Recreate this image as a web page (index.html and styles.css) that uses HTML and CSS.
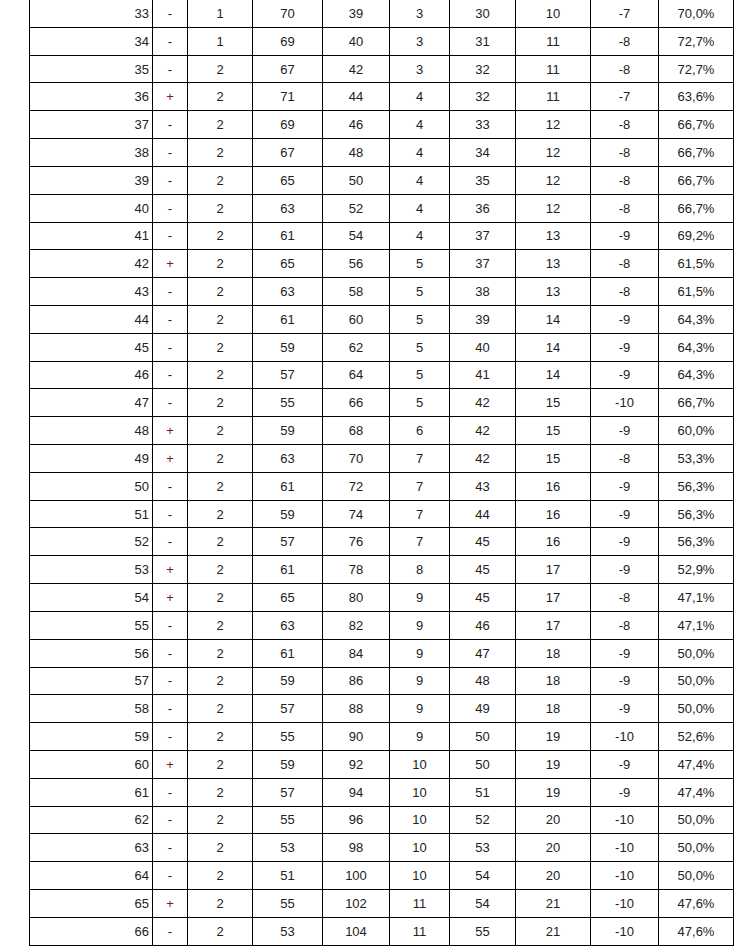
FILE: index.html
```html
<!DOCTYPE html>
<html>
<head>
<meta charset="utf-8">
<link rel="stylesheet" href="styles.css">
</head>
<body>
<table class="grid">
<colgroup>
<col class="c1"><col class="c2"><col class="c3"><col class="c4"><col class="c5"><col class="c6"><col class="c7"><col class="c8"><col class="c9"><col class="c10">
</colgroup>
<tbody>
<tr><td class="n">33</td><td>-</td><td>1</td><td>70</td><td>39</td><td>3</td><td>30</td><td>10</td><td>-7</td><td>70,0%</td></tr>
<tr><td class="n">34</td><td>-</td><td>1</td><td>69</td><td>40</td><td>3</td><td>31</td><td>11</td><td>-8</td><td>72,7%</td></tr>
<tr><td class="n">35</td><td>-</td><td>2</td><td>67</td><td>42</td><td>3</td><td>32</td><td>11</td><td>-8</td><td>72,7%</td></tr>
<tr><td class="n">36</td><td class="p">+</td><td>2</td><td>71</td><td>44</td><td>4</td><td>32</td><td>11</td><td>-7</td><td>63,6%</td></tr>
<tr><td class="n">37</td><td>-</td><td>2</td><td>69</td><td>46</td><td>4</td><td>33</td><td>12</td><td>-8</td><td>66,7%</td></tr>
<tr><td class="n">38</td><td>-</td><td>2</td><td>67</td><td>48</td><td>4</td><td>34</td><td>12</td><td>-8</td><td>66,7%</td></tr>
<tr><td class="n">39</td><td>-</td><td>2</td><td>65</td><td>50</td><td>4</td><td>35</td><td>12</td><td>-8</td><td>66,7%</td></tr>
<tr><td class="n">40</td><td>-</td><td>2</td><td>63</td><td>52</td><td>4</td><td>36</td><td>12</td><td>-8</td><td>66,7%</td></tr>
<tr><td class="n">41</td><td>-</td><td>2</td><td>61</td><td>54</td><td>4</td><td>37</td><td>13</td><td>-9</td><td>69,2%</td></tr>
<tr><td class="n">42</td><td class="p">+</td><td>2</td><td>65</td><td>56</td><td>5</td><td>37</td><td>13</td><td>-8</td><td>61,5%</td></tr>
<tr><td class="n">43</td><td>-</td><td>2</td><td>63</td><td>58</td><td>5</td><td>38</td><td>13</td><td>-8</td><td>61,5%</td></tr>
<tr><td class="n">44</td><td>-</td><td>2</td><td>61</td><td>60</td><td>5</td><td>39</td><td>14</td><td>-9</td><td>64,3%</td></tr>
<tr><td class="n">45</td><td>-</td><td>2</td><td>59</td><td>62</td><td>5</td><td>40</td><td>14</td><td>-9</td><td>64,3%</td></tr>
<tr><td class="n">46</td><td>-</td><td>2</td><td>57</td><td>64</td><td>5</td><td>41</td><td>14</td><td>-9</td><td>64,3%</td></tr>
<tr><td class="n">47</td><td>-</td><td>2</td><td>55</td><td>66</td><td>5</td><td>42</td><td>15</td><td>-10</td><td>66,7%</td></tr>
<tr><td class="n">48</td><td class="p">+</td><td>2</td><td>59</td><td>68</td><td>6</td><td>42</td><td>15</td><td>-9</td><td>60,0%</td></tr>
<tr><td class="n">49</td><td class="p">+</td><td>2</td><td>63</td><td>70</td><td>7</td><td>42</td><td>15</td><td>-8</td><td>53,3%</td></tr>
<tr><td class="n">50</td><td>-</td><td>2</td><td>61</td><td>72</td><td>7</td><td>43</td><td>16</td><td>-9</td><td>56,3%</td></tr>
<tr><td class="n">51</td><td>-</td><td>2</td><td>59</td><td>74</td><td>7</td><td>44</td><td>16</td><td>-9</td><td>56,3%</td></tr>
<tr><td class="n">52</td><td>-</td><td>2</td><td>57</td><td>76</td><td>7</td><td>45</td><td>16</td><td>-9</td><td>56,3%</td></tr>
<tr><td class="n">53</td><td class="p">+</td><td>2</td><td>61</td><td>78</td><td>8</td><td>45</td><td>17</td><td>-9</td><td>52,9%</td></tr>
<tr><td class="n">54</td><td class="p">+</td><td>2</td><td>65</td><td>80</td><td>9</td><td>45</td><td>17</td><td>-8</td><td>47,1%</td></tr>
<tr><td class="n">55</td><td>-</td><td>2</td><td>63</td><td>82</td><td>9</td><td>46</td><td>17</td><td>-8</td><td>47,1%</td></tr>
<tr><td class="n">56</td><td>-</td><td>2</td><td>61</td><td>84</td><td>9</td><td>47</td><td>18</td><td>-9</td><td>50,0%</td></tr>
<tr><td class="n">57</td><td>-</td><td>2</td><td>59</td><td>86</td><td>9</td><td>48</td><td>18</td><td>-9</td><td>50,0%</td></tr>
<tr><td class="n">58</td><td>-</td><td>2</td><td>57</td><td>88</td><td>9</td><td>49</td><td>18</td><td>-9</td><td>50,0%</td></tr>
<tr><td class="n">59</td><td>-</td><td>2</td><td>55</td><td>90</td><td>9</td><td>50</td><td>19</td><td>-10</td><td>52,6%</td></tr>
<tr><td class="n">60</td><td class="p">+</td><td>2</td><td>59</td><td>92</td><td>10</td><td>50</td><td>19</td><td>-9</td><td>47,4%</td></tr>
<tr><td class="n">61</td><td>-</td><td>2</td><td>57</td><td>94</td><td>10</td><td>51</td><td>19</td><td>-9</td><td>47,4%</td></tr>
<tr><td class="n">62</td><td>-</td><td>2</td><td>55</td><td>96</td><td>10</td><td>52</td><td>20</td><td>-10</td><td>50,0%</td></tr>
<tr><td class="n">63</td><td>-</td><td>2</td><td>53</td><td>98</td><td>10</td><td>53</td><td>20</td><td>-10</td><td>50,0%</td></tr>
<tr><td class="n">64</td><td>-</td><td>2</td><td>51</td><td>100</td><td>10</td><td>54</td><td>20</td><td>-10</td><td>50,0%</td></tr>
<tr><td class="n">65</td><td class="p">+</td><td>2</td><td>55</td><td>102</td><td>11</td><td>54</td><td>21</td><td>-10</td><td>47,6%</td></tr>
<tr><td class="n">66</td><td>-</td><td>2</td><td>53</td><td>104</td><td>11</td><td>55</td><td>21</td><td>-10</td><td>47,6%</td></tr>
</tbody>
</table>
</body>
</html>
```
FILE: styles.css
```css
html, body {
  margin: 0;
  padding: 0;
  background: #ffffff;
}
body {
  font-family: "Liberation Sans", Arial, sans-serif;
  font-size: 13px;
  color: #222222;
}
.grid {
  border-collapse: collapse;
  table-layout: fixed;
  width: 705px;
  margin: -1px 0 0 29px;
}
.grid td {
  border: 1px solid #000000;
  padding: 0;
  height: 26.82px;
  text-align: center;
  vertical-align: middle;
  line-height: 15px;
}
.grid td.n {
  text-align: right;
  padding-right: 3px;
}
.grid td.p {
  color: #7a1c1c;
}
.c1 { width: 123px; }
.c2 { width: 35px; }
.c3 { width: 65px; }
.c4 { width: 70px; }
.c5 { width: 67px; }
.c6 { width: 60px; }
.c7 { width: 66px; }
.c8 { width: 75px; }
.c9 { width: 68px; }
.c10 { width: 75px; }
```
